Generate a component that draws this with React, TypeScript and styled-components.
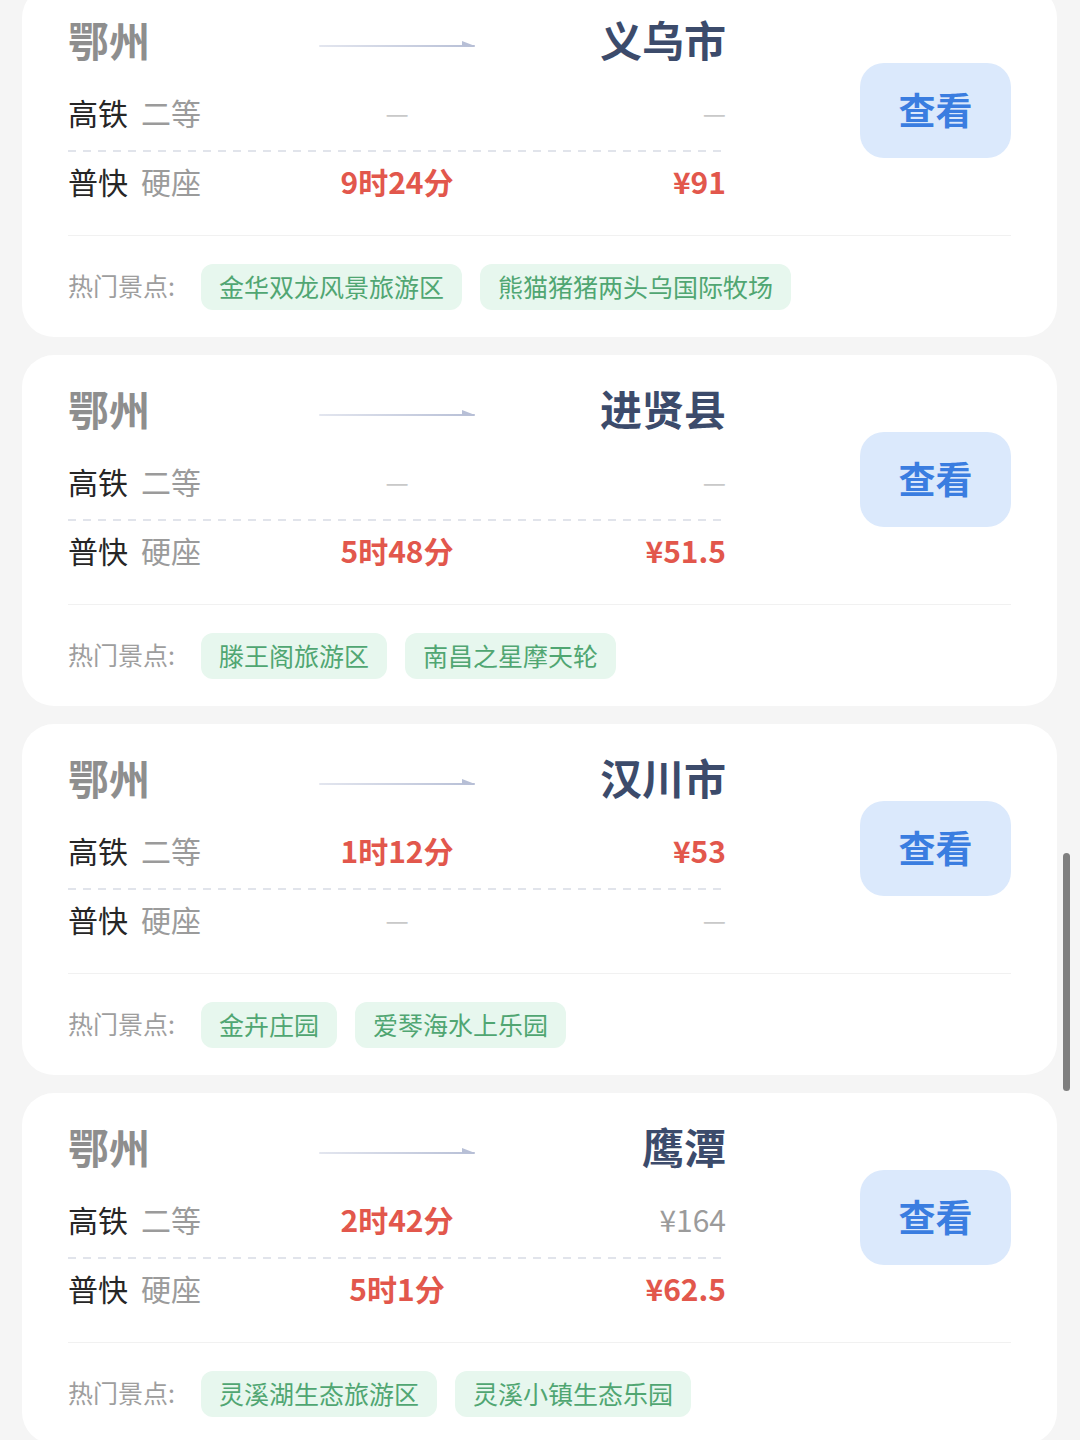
import React from "react";
import styled, { createGlobalStyle } from "styled-components";

const GlobalStyle = createGlobalStyle`
  html, body {
    margin: 0;
    padding: 0;
    background: #f5f5f5;
    font-family: "Noto Sans CJK SC", "Noto Sans", sans-serif;
  }
`;

type Cell = { text: string; kind: "dash" | "hot" | "plain" };

type Trip = {
  to: string;
  rows: { train: string; seat: string; time: Cell; price: Cell }[];
  spots: string[];
};

const dash: Cell = { text: "—", kind: "dash" };
const hot = (text: string): Cell => ({ text, kind: "hot" });

const trips: Trip[] = [
  {
    to: "义乌市",
    rows: [
      { train: "高铁", seat: "二等", time: dash, price: dash },
      { train: "普快", seat: "硬座", time: hot("9时24分"), price: hot("¥91") },
    ],
    spots: ["金华双龙风景旅游区", "熊猫猪猪两头乌国际牧场"],
  },
  {
    to: "进贤县",
    rows: [
      { train: "高铁", seat: "二等", time: dash, price: dash },
      { train: "普快", seat: "硬座", time: hot("5时48分"), price: hot("¥51.5") },
    ],
    spots: ["滕王阁旅游区", "南昌之星摩天轮"],
  },
  {
    to: "汉川市",
    rows: [
      { train: "高铁", seat: "二等", time: hot("1时12分"), price: hot("¥53") },
      { train: "普快", seat: "硬座", time: dash, price: dash },
    ],
    spots: ["金卉庄园", "爱琴海水上乐园"],
  },
  {
    to: "鹰潭",
    rows: [
      { train: "高铁", seat: "二等", time: hot("2时42分"), price: { text: "¥164", kind: "plain" } },
      { train: "普快", seat: "硬座", time: hot("5时1分"), price: hot("¥62.5") },
    ],
    spots: ["灵溪湖生态旅游区", "灵溪小镇生态乐园"],
  },
];

const List = styled.div`
  display: flex;
  flex-direction: column;
  gap: 18px;
  padding: 0 23px 0 22px;
  margin-top: -14px;
`;

const Card = styled.div`
  background: #ffffff;
  border-radius: 32px;
  padding: 28px 46px 27px;
`;

const Top = styled.div`
  display: flex;
  align-items: center;
  justify-content: space-between;
  padding-bottom: 22px;
  border-bottom: 1px solid #f1f1f1;
`;

const Info = styled.div`
  width: 658px;
  display: flex;
  flex-direction: column;
`;

const Grid = styled.div<{ $h: number }>`
  display: grid;
  grid-template-columns: 200px 258px 200px;
  align-items: center;
  height: ${(p) => p.$h}px;
`;

const City = styled.div<{ $dest?: boolean }>`
  font-size: ${(p) => (p.$dest ? "42px" : "41px")};
  font-weight: 700;
  line-height: 50px;
  padding-bottom: 6px;
  color: ${(p) => (p.$dest ? "#3c4b6b" : "#8e8e8e")};
  text-align: ${(p) => (p.$dest ? "right" : "left")};
  white-space: nowrap;
`;

const ArrowWrap = styled.div`
  display: flex;
  justify-content: center;
  padding-top: 2px;
`;

const RowGap = styled.div`
  height: 14px;
`;

const Dashed = styled.div`
  margin-top: 6px;
  height: 2px;
  background: repeating-linear-gradient(
    90deg,
    #e1e4eb 0 8px,
    transparent 8px 15px
  );
`;

const Label = styled.div`
  display: flex;
  gap: 13px;
  font-size: 30px;
  line-height: 40px;
  padding-bottom: 4px;
  white-space: nowrap;
`;

const Train = styled.span`
  color: #262626;
`;

const Seat = styled.span`
  color: #9b9b9b;
`;

const Value = styled.div<{ $kind: Cell["kind"]; $align: "center" | "right" }>`
  text-align: ${(p) => p.$align};
  font-size: ${(p) => (p.$kind === "dash" ? "26px" : "30px")};
  line-height: 40px;
  padding-bottom: 4px;
  font-weight: ${(p) => (p.$kind === "hot" ? 700 : 400)};
  color: ${(p) =>
    p.$kind === "hot" ? "#e2574c" : p.$kind === "dash" ? "#c9c9c9" : "#9b9b9b"};
  white-space: nowrap;
`;

const ViewButton = styled.button`
  box-sizing: border-box;
  width: 151px;
  height: 95px;
  margin-bottom: 6px;
  border: none;
  border-radius: 24px;
  background: #dbe9fc;
  color: #3a7de0;
  font-family: inherit;
  font-size: 37px;
  font-weight: 700;
  padding: 0 0 4px;
`;

const TagRow = styled.div`
  display: flex;
  align-items: center;
  gap: 18px;
  padding-top: 28px;
`;

const TagLabel = styled.span`
  font-size: 25px;
  color: #9e9e9e;
  margin-right: 8px;
  padding-bottom: 4px;
  white-space: nowrap;
`;

const Tag = styled.span`
  box-sizing: border-box;
  height: 46px;
  display: flex;
  align-items: center;
  padding: 0 18px 3px;
  border-radius: 12px;
  background: #e7f7ee;
  color: #50a672;
  font-size: 25px;
  white-space: nowrap;
`;

const Scrollbar = styled.div`
  position: fixed;
  right: 10px;
  top: 853px;
  width: 7px;
  height: 238px;
  border-radius: 4px;
  background: #7f7f7f;
`;

const Arrow = () => (
  <svg width="157" height="9" viewBox="0 0 157 9">
    <defs>
      <linearGradient id="arrowLine" x1="0" x2="1" y1="0" y2="0">
        <stop offset="0" stopColor="#e3e6ef" />
        <stop offset="1" stopColor="#b7bfd6" />
      </linearGradient>
    </defs>
    <rect x="0" y="6" width="156" height="2" rx="1" fill="url(#arrowLine)" />
    <polygon points="143,2 156,7 143,7" fill="#b7bfd6" />
  </svg>
);

const TripCard = ({ trip }: { trip: Trip }) => (
  <Card>
    <Top>
      <Info>
        <Grid $h={56}>
          <City>鄂州</City>
          <ArrowWrap>
            <Arrow />
          </ArrowWrap>
          <City $dest>{trip.to}</City>
        </Grid>
        <RowGap />
        {trip.rows.map((row, i) => (
          <React.Fragment key={row.train}>
            {i > 0 && <Dashed />}
            <Grid $h={i === 0 ? 60 : 61}>
              <Label>
                <Train>{row.train}</Train>
                <Seat>{row.seat}</Seat>
              </Label>
              <Value $kind={row.time.kind} $align="center">
                {row.time.text}
              </Value>
              <Value $kind={row.price.kind} $align="right">
                {row.price.text}
              </Value>
            </Grid>
          </React.Fragment>
        ))}
      </Info>
      <ViewButton>查看</ViewButton>
    </Top>
    <TagRow>
      <TagLabel>热门景点:</TagLabel>
      {trip.spots.map((s) => (
        <Tag key={s}>{s}</Tag>
      ))}
    </TagRow>
  </Card>
);

const App = () => {
  return (
    <>
      <GlobalStyle />
      <List>
        {trips.map((t) => (
          <TripCard key={t.to} trip={t} />
        ))}
      </List>
      <Scrollbar />
    </>
  );
};

export default App;
